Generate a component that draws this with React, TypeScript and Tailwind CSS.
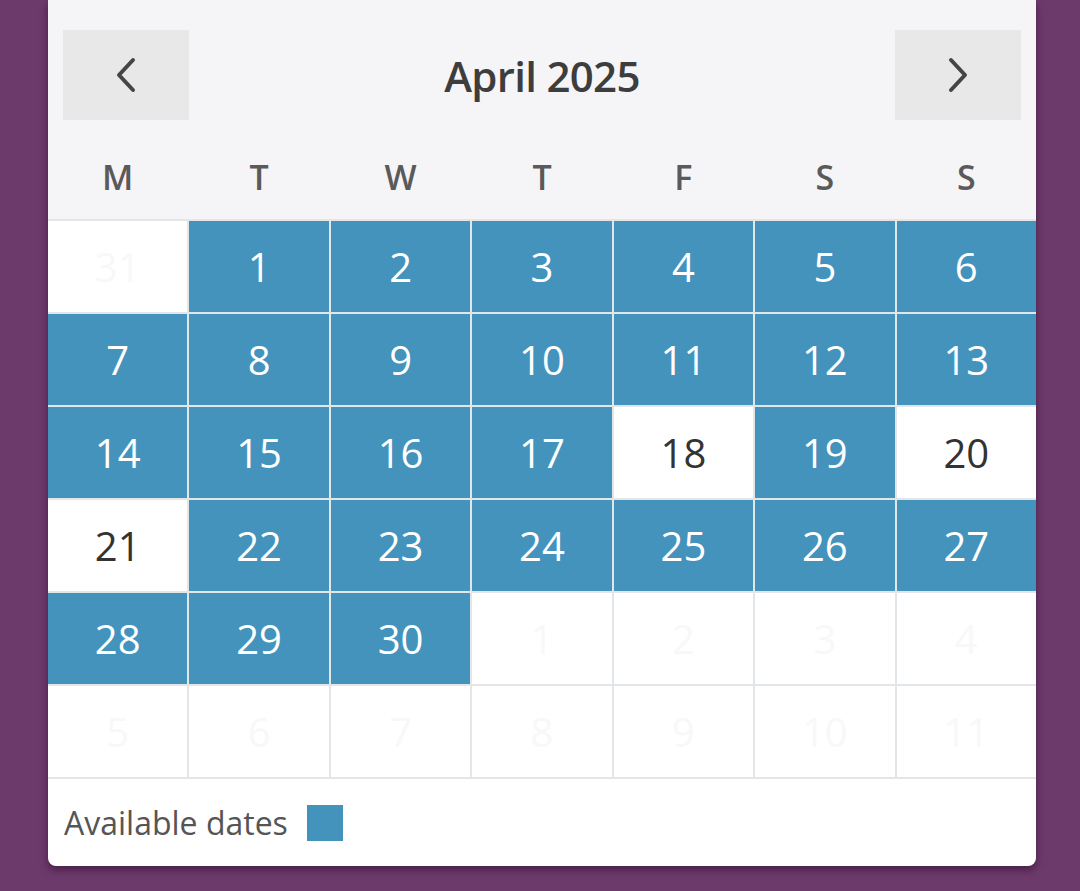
import React from "react";

type Cell = { n: number; kind: "avail" | "busy" | "out" };

const busy = new Set([18, 20, 21]);

const cells: Cell[] = [];
cells.push({ n: 31, kind: "out" });
for (let d = 1; d <= 30; d++) cells.push({ n: d, kind: busy.has(d) ? "busy" : "avail" });
for (let d = 1; d <= 11; d++) cells.push({ n: d, kind: "out" });

const Chevron = ({ dir }: { dir: "left" | "right" }) => (
  <svg width="22" height="36" viewBox="0 0 22 36" fill="none">
    {dir === "left" ? (
      <polyline points="18,3 4,18 18,33" stroke="#454545" strokeWidth="4" strokeLinecap="round" strokeLinejoin="round" />
    ) : (
      <polyline points="4,3 18,18 4,33" stroke="#454545" strokeWidth="4" strokeLinecap="round" strokeLinejoin="round" />
    )}
  </svg>
);

export default function App() {
  const days = ["M", "T", "W", "T", "F", "S", "S"];
  return (
    <div
      className="min-h-[891px] w-full bg-[#6d3a6c] pb-[25px]"
      style={{ fontFamily: '"Open Sans", "Noto Sans", sans-serif' }}
    >
      <div className="ml-[48px] w-[988px] overflow-hidden rounded-b-[8px] bg-white shadow-[0_4px_8px_rgba(40,10,40,0.55)]">
        <div className="bg-[#f5f5f8] px-[15px] pt-[30px]">
          <div className="flex items-center justify-between">
            <div className="flex h-[90px] w-[126px] items-center justify-center bg-[#e8e8e8]">
              <Chevron dir="left" />
            </div>
            <div className="text-[42px] font-semibold tracking-[-0.7px] text-[#3d3d3d]">April 2025</div>
            <div className="flex h-[90px] w-[126px] items-center justify-center bg-[#e8e8e8]">
              <Chevron dir="right" />
            </div>
          </div>
        </div>
        <div className="grid h-[99px] grid-cols-7 gap-x-[2px] bg-[#f5f5f8] pt-[16px]">
          {days.map((d, i) => (
            <div key={i} className="flex items-center justify-center text-[34px] font-semibold text-[#5a5a5a]">
              {d}
            </div>
          ))}
        </div>
        <div className="grid grid-cols-7 gap-[2px] border-y-[2px] border-[#e5e5e5] bg-[#e3e6e8]">
          {cells.map((c, i) => (
            <div
              key={i}
              className={
                c.kind === "avail"
                  ? "flex h-[91px] items-center justify-center bg-[#4393bd] text-[40px] text-white"
                  : c.kind === "busy"
                  ? "flex h-[91px] items-center justify-center bg-white text-[40px] text-[#333333]"
                  : "flex h-[91px] items-center justify-center bg-white text-[40px] text-[#f8f8f8]"
              }
            >
              {c.n}
            </div>
          ))}
        </div>
        <div className="flex h-[87px] items-center gap-[19px] pl-[16px]">
          <span className="text-[32px] text-[#555555]">Available dates</span>
          <span className="h-[36px] w-[36px] bg-[#4393bd]" />
        </div>
      </div>
    </div>
  );
}
